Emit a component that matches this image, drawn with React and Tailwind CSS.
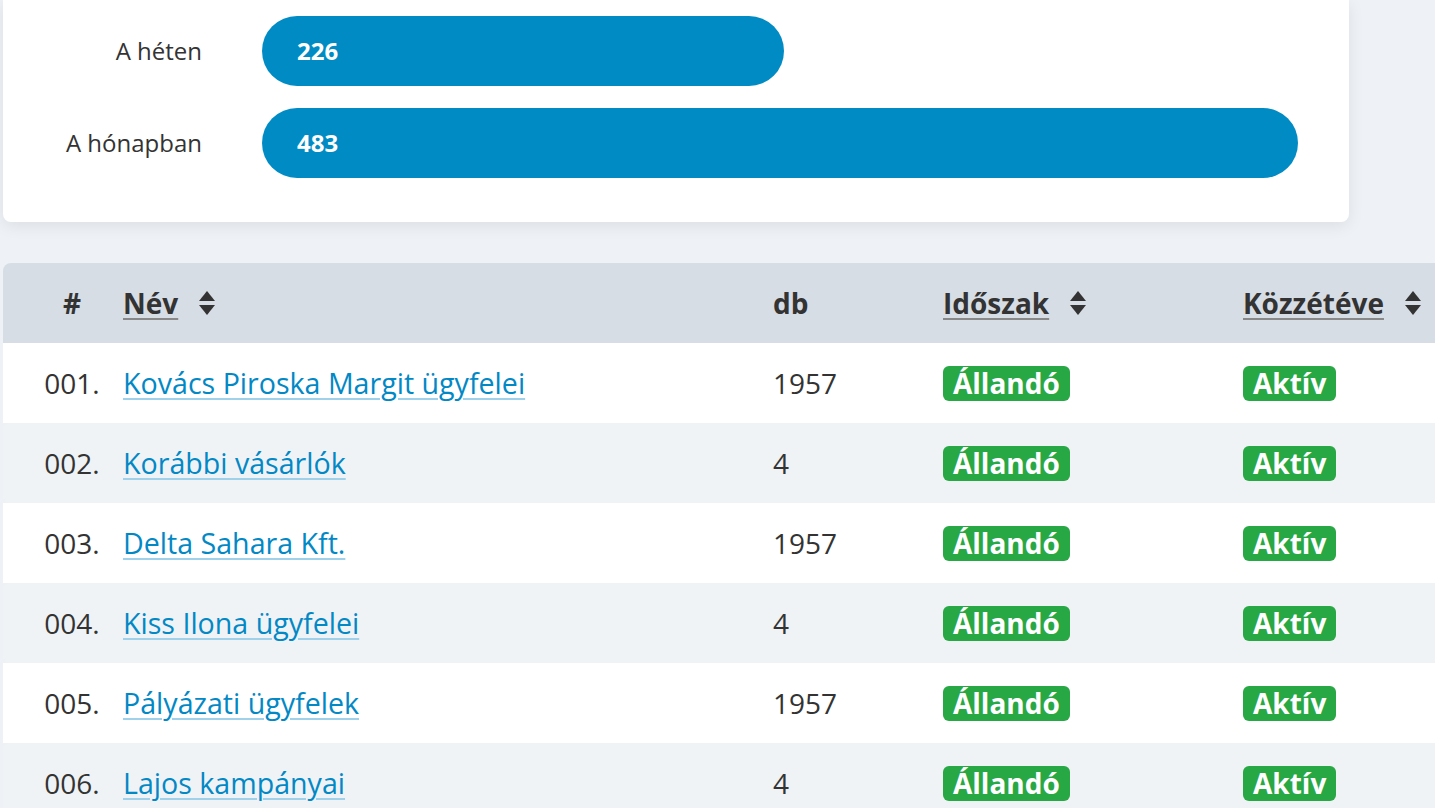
import React from 'react';

const rows = [
  { n: '001.', name: 'Kovács Piroska Margit ügyfelei', db: 1957 },
  { n: '002.', name: 'Korábbi vásárlók', db: 4 },
  { n: '003.', name: 'Delta Sahara Kft.', db: 1957 },
  { n: '004.', name: 'Kiss Ilona ügyfelei', db: 4 },
  { n: '005.', name: 'Pályázati ügyfelek', db: 1957 },
  { n: '006.', name: 'Lajos kampányai', db: 4 },
];

const SortIcon = () => (
  <svg width="18" height="28" viewBox="0 0 18 28" className="ml-5 shrink-0">
    <path d="M9 2 L17 12 H1 Z" fill="#333" />
    <path d="M1 16 H17 L9 26 Z" fill="#333" />
  </svg>
);

const Badge = ({ children }) => (
  <span className="inline-block bg-[#28a745] text-white font-bold rounded-md px-[10px] leading-[35px] text-[28px]">
    {children}
  </span>
);

const App = () => {
  return (
    <div className="w-[1435px] h-[808px] overflow-hidden bg-[#eef2f6] text-[#333] font-['Open_Sans',sans-serif]">
      {/* Stats card */}
      <div className="ml-[3px] w-[1346px] bg-white rounded-b-lg shadow-[0_4px_16px_rgba(0,0,0,0.08)] pt-4 pb-11">
        {[
          { label: 'A héten', value: 226, width: 522 },
          { label: 'A hónapban', value: 483, width: 1036 },
        ].map((b, i) => (
          <div key={b.label} className={`flex items-center ${i > 0 ? 'mt-[22px]' : ''}`}>
            <div className="w-[199px] text-right text-[24px]">{b.label}</div>
            <div
              className="ml-[60px] h-[70px] rounded-full bg-[#008bc4] flex items-center pl-[35px] text-white font-bold text-[24px]"
              style={{ width: b.width }}
            >
              {b.value}
            </div>
          </div>
        ))}
      </div>

      {/* Table */}
      <div className="ml-[3px] mt-[41px] w-[1500px]">
        <div className="flex items-center h-[80px] bg-[#d6dde5] rounded-t-lg font-bold text-[28px]">
          <div className="w-[120px] pl-[18px] text-center">#</div>
          <div className="w-[650px] flex items-center">
            <span className="underline decoration-[#888] underline-offset-4 decoration-2">Név</span>
            <SortIcon />
          </div>
          <div className="w-[170px]">db</div>
          <div className="w-[300px] flex items-center">
            <span className="underline decoration-[#888] underline-offset-4 decoration-2">Időszak</span>
            <SortIcon />
          </div>
          <div className="flex items-center">
            <span className="underline decoration-[#888] underline-offset-4 decoration-2">Közzétéve</span>
            <SortIcon />
          </div>
        </div>
        {rows.map((r, i) => (
          <div
            key={r.n}
            className={`flex items-center h-[80px] text-[28px] ${i % 2 === 1 ? 'bg-[#eff3f6] rounded-l-lg' : 'bg-white'}`}
          >
            <div className="w-[120px] pl-[18px] text-center">{r.n}</div>
            <div className="w-[650px]">
              <a href="#" className="text-[28.6px] text-[#0288c5] underline decoration-[#9fd2ea] underline-offset-4 decoration-2">
                {r.name}
              </a>
            </div>
            <div className="w-[170px]">{r.db}</div>
            <div className="w-[300px]">
              <Badge>Állandó</Badge>
            </div>
            <div>
              <Badge>Aktív</Badge>
            </div>
          </div>
        ))}
      </div>
    </div>
  );
};

export default App;
